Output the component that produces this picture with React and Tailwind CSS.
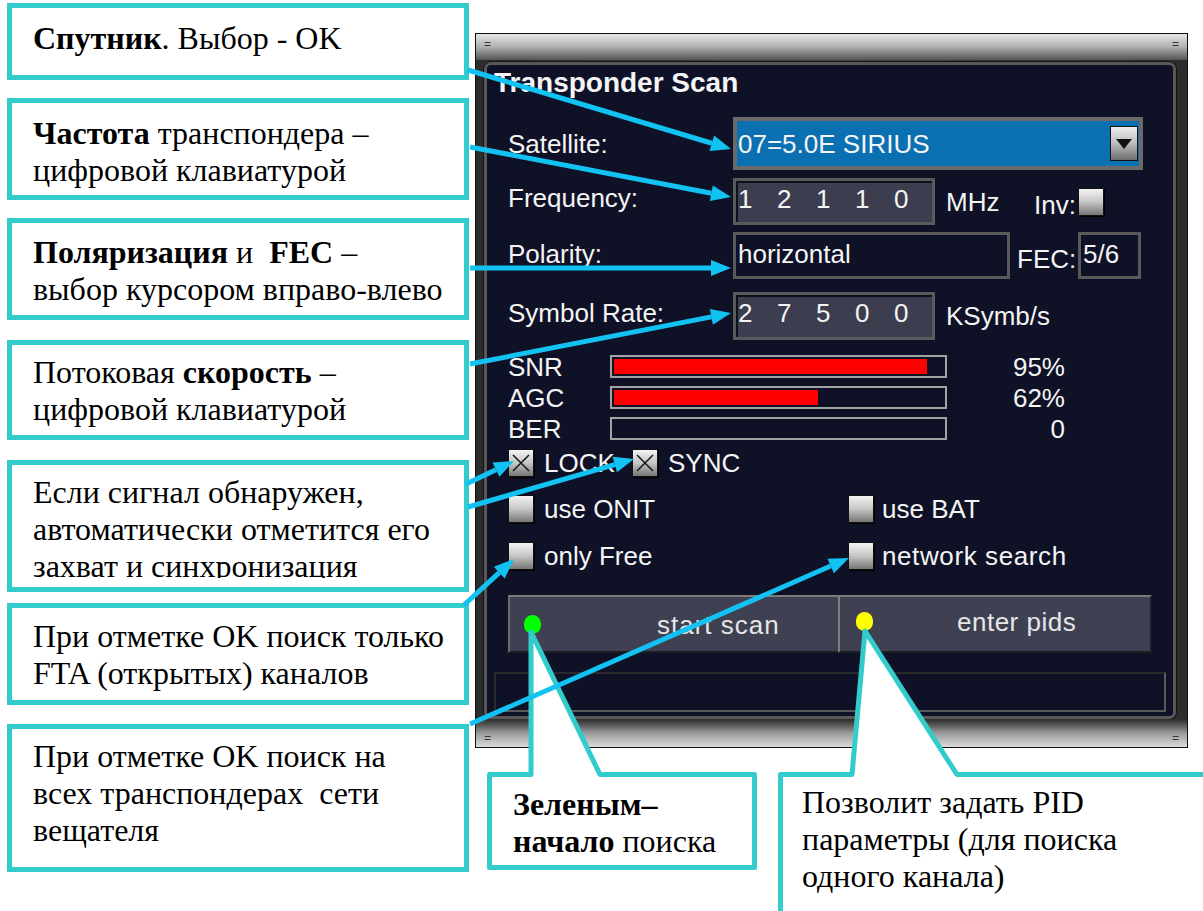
import React from 'react';

const BLUE = '#12c2f2';
const TEAL = '#33cccc';

// blue pointer arrow drawn over the page
function Arrow({ from, to }) {
  const [x1, y1] = from;
  const [x2, y2] = to;
  const a = Math.atan2(y2 - y1, x2 - x1);
  const len = 20;
  const w = 8;
  const bx = x2 - len * Math.cos(a);
  const by = y2 - len * Math.sin(a);
  const px = -Math.sin(a) * w;
  const py = Math.cos(a) * w;
  return (
    <g>
      <line x1={x1} y1={y1} x2={bx} y2={by} stroke={BLUE} strokeWidth="5" />
      <polygon points={`${x2},${y2} ${bx + px},${by + py} ${bx - px},${by - py}`} fill={BLUE} />
    </g>
  );
}

function Check({ checked }) {
  return (
    <div className="relative h-[28px] w-[26px] shrink-0 border border-[#111] bg-linear-to-b from-[#f4f4f4] via-[#c6c6c6] to-[#767676] shadow-[1px_1px_0_#000]">
      {checked && (
        <svg className="absolute left-0 top-0" width="24" height="26" viewBox="0 0 24 26">
          <path d="M4 5 L20 21 M20 5 L4 21" stroke="#1a1a1a" strokeWidth="1.6" fill="none" />
        </svg>
      )}
    </div>
  );
}

function Digits({ value }) {
  return (
    <div className="flex pl-[2px]">
      {value.split('').map((d, i) => (
        <span key={i} className="w-[39px]">{d}</span>
      ))}
    </div>
  );
}

function Bar({ label, value, pct }) {
  return (
    <div className="flex h-[31px] items-center">
      <span className="ml-[21px] w-[102px]">{label}</span>
      <div className="h-[23px] w-[337px] border-2 border-[#a3a3a3] bg-[#0f1127] p-[2px]">
        <div className="h-full bg-[#ff0000]" style={{ width: `${pct}%` }} />
      </div>
      <span className="w-[118px] text-right">{value}</span>
    </div>
  );
}

function ScanWindow() {
  return (
    <div className="flex h-[715px] w-[713px] flex-col border border-[#111] bg-[#3a3a3a] font-['Liberation_Sans',Arial,sans-serif] text-[26px] leading-none text-[#f4f4f4]">
      {/* title strip */}
      <div className="flex h-[26px] items-start justify-between bg-linear-to-b from-[#e6e6e6] via-[#b0b0b0] to-[#555] px-[8px] pt-[4px] text-[12px] text-[#333]">
        <span>=</span>
        <span>=</span>
      </div>

      <div className="flex flex-1 bg-linear-to-r from-[#2c2c2c] via-[#444] to-[#2c2c2c]">
        <div className="ml-[8px] mt-[2px] flex h-[657px] w-[692px] flex-col rounded-[7px] border-[3px] border-[#585858] bg-[#0f1127] shadow-[0_0_0_1px_#151515]">
          <div className="ml-[7px] flex h-[35px] items-center text-[28px] font-bold">Transponder Scan</div>

          <div className="mt-[17px] flex h-[53px] items-center">
            <span className="ml-[21px] w-[225px]">Satellite:</span>
            <div className="flex h-[53px] w-[410px] items-center justify-between border-[4px] border-[#6a6a6a] bg-[#0a70b2] pl-[1px] pr-[1px]">
              <span>07=5.0E SIRIUS</span>
              <div className="flex h-[35px] w-[28px] items-center justify-center border border-[#111] bg-linear-to-b from-[#ececec] via-[#bdbdbd] to-[#6e6e6e]">
                <svg width="16" height="10" viewBox="0 0 16 10">
                  <path d="M0 0 H16 L8 10 Z" fill="#111" />
                </svg>
              </div>
            </div>
          </div>

          <div className="mt-[8px] flex h-[47px] items-center">
            <span className="mb-[7px] ml-[21px] w-[225px]">Frequency:</span>
            <div className="flex h-[47px] w-[202px] items-center border-[3px] border-[#5a5a5a] bg-[#3c3d4f] pb-[6px] shadow-[inset_2px_2px_0_#101018]">
              <Digits value="12110" />
            </div>
            <span className="ml-[11px] w-[88px]">MHz</span>
            <span className="mt-[6px] w-[44px]">Inv:</span>
            <Check />
          </div>

          <div className="mt-[7px] flex h-[47px] items-center">
            <span className="mb-[3px] ml-[21px] w-[225px]">Polarity:</span>
            <div className="flex h-[47px] w-[277px] items-center border-[3px] border-[#5a5a5a] bg-[#0f1127] pb-[4px] pl-[2px]">horizontal</div>
            <span className="ml-[7px] mt-[7px] w-[61px]">FEC:</span>
            <div className="flex h-[47px] w-[63px] items-center border-[3px] border-[#5a5a5a] bg-[#0f1127] pb-[4px] pl-[2px]">5/6</div>
          </div>

          <div className="mt-[13px] flex h-[48px] items-center">
            <span className="mb-[6px] ml-[21px] w-[225px]">Symbol Rate:</span>
            <div className="flex h-[48px] w-[202px] items-center border-[3px] border-[#5a5a5a] bg-[#3c3d4f] pb-[6px] shadow-[inset_2px_2px_0_#101018]">
              <Digits value="27500" />
            </div>
            <span className="ml-[11px]">KSymb/s</span>
          </div>

          <div className="mt-[11px] flex flex-col">
            <Bar label="SNR" value="95%" pct={95} />
            <Bar label="AGC" value="62%" pct={62} />
            <Bar label="BER" value="0" pct={0} />
          </div>

          <div className="mt-[4px] flex h-[29px] items-center">
            <div className="ml-[21px] flex w-[124px] items-center">
              <Check checked />
              <span className="ml-[10px]">LOCK</span>
            </div>
            <Check checked />
            <span className="ml-[10px]">SYNC</span>
          </div>

          <div className="mt-[18px] flex h-[28px] items-center">
            <div className="ml-[21px] flex w-[340px] items-center">
              <Check />
              <span className="ml-[10px]">use ONIT</span>
            </div>
            <Check />
            <span className="ml-[8px]">use BAT</span>
          </div>

          <div className="mt-[19px] flex h-[28px] items-center">
            <div className="ml-[21px] flex w-[340px] items-center">
              <Check />
              <span className="ml-[10px]">only Free</span>
            </div>
            <Check />
            <span className="ml-[8px] tracking-[0.6px]">network search</span>
          </div>

          <div className="ml-[21px] mt-[25px] flex h-[58px] w-[644px] text-[#e6e6e6]">
            <div className="flex w-[330px] items-center border-l-2 border-t-2 border-b-2 border-l-[#6c6c6c] border-t-[#7c7c7c] border-b-[#1c1c24] bg-[#3f4153]">
              <span className="ml-[14px] h-[19px] w-[17px] rounded-full bg-[#00ff00]" />
              <span className="ml-[116px] mt-[2px] tracking-[1px]">start scan</span>
            </div>
            <div className="flex flex-1 items-center border-l-2 border-t-2 border-b-2 border-r-2 border-l-[#808080] border-t-[#7c7c7c] border-b-[#1c1c24] border-r-[#1c1c24] bg-[#3f4153]">
              <span className="mb-[5px] ml-[16px] h-[19px] w-[17px] rounded-full bg-[#ffff00]" />
              <span className="mb-[5px] ml-[84px] tracking-[0.5px]">enter pids</span>
            </div>
          </div>

          <div className="ml-[7px] mt-[19px] h-[40px] w-[672px] border-2 border-b-[#5a5a5a] border-l-[#2a2a2a] border-r-[#5a5a5a] border-t-[#2a2a2a] bg-[#0f1127]" />
        </div>
      </div>

      {/* bottom strip */}
      <div className="flex h-[28px] items-end justify-between bg-linear-to-b from-[#2c2c2c] via-[#9a9a9a] to-[#dcdcdc] px-[8px] pb-[3px] text-[12px] text-[#333]">
        <span>=</span>
        <span>=</span>
      </div>
    </div>
  );
}

export default function App() {
  return (
    <div className="relative flex h-[911px] w-[1203px] overflow-hidden bg-white font-['Liberation_Serif','Times_New_Roman',serif] text-[32px] leading-[37px] text-black">
      {/* callouts on the left */}
      <div className="flex w-[475px] shrink-0 flex-col pl-[7px] pt-[3px]">
        <div className="h-[77px] w-[462px] border-[5px] border-[#33cccc] bg-white pl-[21px] pt-[12px]">
          <b>Спутник</b>. Выбор - OK
        </div>
        <div className="mt-[18px] h-[102px] w-[462px] border-[5px] border-[#33cccc] bg-white pl-[21px] pt-[12px]">
          <b>Частота</b> транспондера –<br />цифровой клавиатурой
        </div>
        <div className="mt-[18px] h-[102px] w-[462px] border-[5px] border-[#33cccc] bg-white pl-[21px] pt-[11px]">
          <b>Поляризация</b> и {'\u00a0'}<b>FEC</b> –<br />выбор курсором вправо-влево
        </div>
        <div className="mt-[20px] h-[100px] w-[462px] border-[5px] border-[#33cccc] bg-white pl-[21px] pt-[9px]">
          Потоковая <b>скорость</b> –<br />цифровой клавиатурой
        </div>
        <div className="mt-[20px] h-[132px] w-[462px] border-[5px] border-[#33cccc] bg-white">
          <div className="h-[113px] overflow-hidden pl-[21px] pt-[9px]">
            Если сигнал обнаружен,<br />автоматически отметится его<br />захват и синхронизация
          </div>
        </div>
        <div className="mt-[11px] h-[102px] w-[462px] border-[5px] border-[#33cccc] bg-white pl-[21px] pt-[10px]">
          При отметке OK поиск только<br />FTA (открытых) каналов
        </div>
        <div className="mt-[19px] h-[148px] w-[462px] border-[5px] border-[#33cccc] bg-white pl-[21px] pt-[9px]">
          При отметке OK поиск на<br />всех транспондерах {'\u00a0'}сети<br />вещателя
        </div>
      </div>

      {/* screen and the callouts under it */}
      <div className="flex flex-col pt-[33px]">
        <ScanWindow />
        <div className="mt-[24px] flex">
          <div className="relative ml-[12px] h-[98px] w-[270px]">
            <svg className="absolute left-0 top-0 overflow-visible" width="270" height="98">
              <path
                d="M2.5 2.5 H44 V-140 L113 2.5 H267.5 V95.5 H2.5 Z"
                fill="white"
                stroke={TEAL}
                strokeWidth="5"
                strokeLinejoin="round"
              />
            </svg>
            <div className="relative pl-[26px] pt-[14px]">
              <b>Зеленым–</b>
              <br />
              <b>начало</b> поиска
            </div>
          </div>
          <div className="relative ml-[21px] h-[200px] w-[460px]">
            <svg className="absolute left-0 top-0 overflow-visible" width="460" height="200">
              <path
                d="M2.5 200 V2.5 H74 L87 -141 L179 2.5 H460 V200 Z"
                fill="white"
                stroke={TEAL}
                strokeWidth="5"
                strokeLinejoin="round"
              />
            </svg>
            <div className="relative pl-[24px] pt-[12px]">
              Позволит задать PID<br />параметры (для поиска<br />одного канала)
            </div>
          </div>
        </div>
      </div>

      {/* pointers */}
      <svg className="pointer-events-none absolute left-0 top-0" width="1203" height="911">
        <Arrow from={[468, 70]} to={[731, 149]} />
        <Arrow from={[470, 147]} to={[731, 197]} />
        <Arrow from={[470, 268]} to={[731, 268]} />
        <Arrow from={[470, 364]} to={[731, 313]} />
        <Arrow from={[466, 484]} to={[514, 461]} />
        <Arrow from={[468, 507]} to={[634, 459]} />
        <Arrow from={[464, 605]} to={[514, 559]} />
        <Arrow from={[470, 724]} to={[849, 558]} />
      </svg>
    </div>
  );
}
